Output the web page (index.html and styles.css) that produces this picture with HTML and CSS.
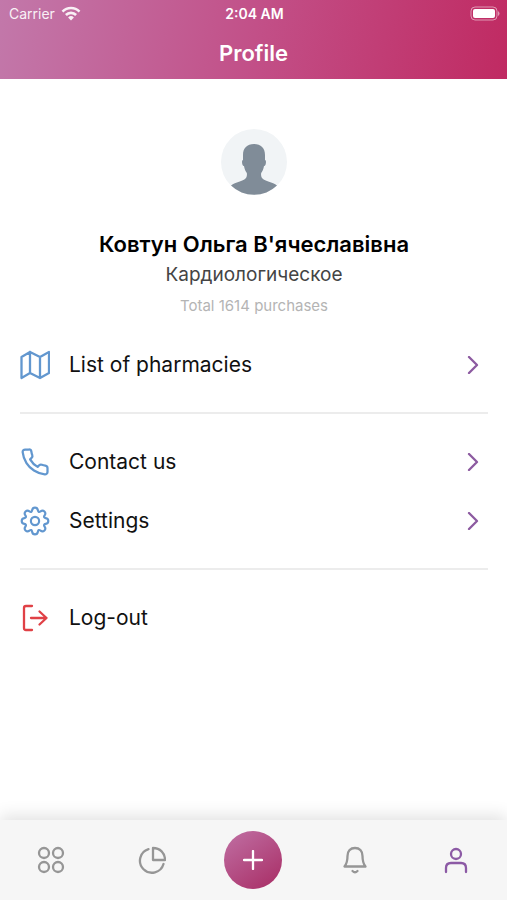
FILE: index.html
```html
<!doctype html>
<html lang="en">
<head>
	<title>Profile</title>

	<meta charset="utf-8" />
	<meta name="viewport" content="width=device-width, initial-scale=1" />

	<link rel="stylesheet" href="styles.css">
</head>

<body>
	<header id="topbar">
		<div class="status">
			<div class="carrier">
				<span>Carrier</span>
				<svg width="20" height="15" viewBox="0 0 20 15" fill="none" stroke="#fff" stroke-width="2.6">
					<path d="M1.5 5.6a12 12 0 0 1 17 0" />
					<path d="M4.9 9a7.2 7.2 0 0 1 10.2 0" />
					<path d="M10 14.5l-2.9-3a4.1 4.1 0 0 1 5.8 0z" fill="#fff" stroke="none" />
				</svg>
			</div>
			<span class="clock">2:04 AM</span>
			<div class="battery">
				<svg width="31" height="15" viewBox="0 0 31 15">
					<rect x="2" y="1" width="26" height="13" rx="4" fill="none" stroke="#fff" stroke-opacity="0.5" />
					<rect x="4" y="3" width="22" height="9" rx="2" fill="#fff" />
					<path d="M29 5v5q1.5-1 1.5-2.5t-1.5-2.5z" fill="#fff" fill-opacity="0.5" />
				</svg>
			</div>
		</div>
		<h1>Profile</h1>
	</header>

	<main>
		<section class="person">
			<svg class="avatar" width="66" height="66" viewBox="0 0 66 66">
				<circle cx="33" cy="33" r="33" fill="#f1f4f6" />
				<path fill="#808c98" d="M33 15c-7 0-11 4-11 11v5c-1 0-1.2 2-.7 4 .3 1.500 1 2 1.700 2 .4 3 1.500 5 2.800 7 .4 2 0 4-1.300 5.500-2.500 3-10 3.500-14.500 7a33 33 0 0 0 46 0c-4.500-3.500-12-4-14.500-7-1.300-1.500-1.700-3.500-1.300-5.500 1.300-2 2.400-4 2.800-7 .7 0 1.400-.5 1.700-2 .5-2 .3-4-.7-4v-5c0-7-4-11-11-11z" />
			</svg>
			<h2>Ковтун Ольга В'ячеславівна</h2>
			<p class="department">Кардиологическое</p>
			<p class="total">Total 1614 purchases</p>
		</section>

		<nav class="menu" aria-label="Profile menu">
			<a href="#pharmacies">
				<svg class="icon" width="30" height="30" viewBox="0 0 30 30">
					<path d="M1.5 7L10 2l10 5 9-5v21l-9 5-10-5-8.5 5zM10 2v21M20 7v21" />
				</svg>
				<span>List of pharmacies</span>
				<svg class="arrow" width="12" height="18" viewBox="0 0 12 18"><path d="M2 1l8 8-8 8" /></svg>
			</a>
			<hr>
			<a href="#contact">
				<svg class="icon" width="30" height="30" viewBox="0 0 24 24">
					<path class="thin" d="M22 16.92v3a2 2 0 0 1-2.18 2 19.79 19.79 0 0 1-8.63-3.07 19.5 19.5 0 0 1-6-6 19.79 19.79 0 0 1-3.07-8.67A2 2 0 0 1 4.11 2h3a2 2 0 0 1 2 1.72c.127.96.361 1.903.7 2.81a2 2 0 0 1-.45 2.11L8.09 9.91a16 16 0 0 0 6 6l1.27-1.27a2 2 0 0 1 2.11-.45c.907.339 1.85.573 2.81.7A2 2 0 0 1 22 16.92z" />
				</svg>
				<span>Contact us</span>
				<svg class="arrow" width="12" height="18" viewBox="0 0 12 18"><path d="M2 1l8 8-8 8" /></svg>
			</a>
			<a href="#settings">
				<svg class="icon" width="30" height="30" viewBox="-1 -1 32 32">
					<circle cx="15" cy="15" r="4.4" />
					<path d="M15 .8Q17.6 .8 18.1 3.6Q18.6 6.4 20.9 4.75Q23.2 3.1 25.05 4.95Q26.9 6.8 25.25 9.1Q23.6 11.4 26.4 11.9Q29.2 12.4 29.2 15Q29.2 17.6 26.4 18.1Q23.6 18.6 25.25 20.9Q26.9 23.2 25.05 25.05Q23.2 26.9 20.9 25.25Q18.6 23.6 18.1 26.4Q17.6 29.2 15 29.2Q12.4 29.2 11.9 26.4Q11.4 23.6 9.1 25.25Q6.8 26.9 4.95 25.05Q3.1 23.2 4.75 20.9Q6.4 18.6 3.6 18.1Q.8 17.6 .8 15Q.8 12.4 3.6 11.9Q6.4 11.4 4.75 9.1Q3.1 6.8 4.95 4.95Q6.8 3.1 9.1 4.75Q11.4 6.4 11.9 3.6Q12.4 .8 15 .8z" />
				</svg>
				<span>Settings</span>
				<svg class="arrow" width="12" height="18" viewBox="0 0 12 18"><path d="M2 1l8 8-8 8" /></svg>
			</a>
			<hr>
			<a href="#logout">
				<svg class="icon red" width="30" height="30" viewBox="0 0 30 30">
					<path d="M12 3H6q-2 0-2 2v20q0 2 2 2h6M11 15h15.5M19.5 8.5l7 6.5-7 6.5" />
				</svg>
				<span>Log-out</span>
			</a>
		</nav>
	</main>

	<nav class="tabs" aria-label="Main">
		<a href="#home" aria-label="Home">
			<svg width="28" height="28" viewBox="0 0 28 28">
				<circle cx="7" cy="7" r="5" /><circle cx="21" cy="7" r="5" />
				<circle cx="7" cy="21" r="5" /><circle cx="21" cy="21" r="5" />
			</svg>
		</a>
		<a href="#stats" aria-label="Statistics">
			<svg width="28" height="28" viewBox="0 0 28 28">
				<path d="M15 2v12h12C27 7 22 2 15 2z" />
				<path d="M10.5 3.2A12 12 0 1 0 25.5 18" />
			</svg>
		</a>
		<button class="add" type="button" aria-label="Add">
			<svg width="20" height="20" viewBox="0 0 20 20"><path d="M10 1v18M1 10h18" /></svg>
		</button>
		<a href="#alerts" aria-label="Notifications">
			<svg width="28" height="28" viewBox="0 0 28 28">
				<path d="M3.5 20.5C6 17.5 6.5 15 6.500 10c0-5 3-8 7.500-8s7.500 3 7.500 8c0 5 .5 7.500 3 10.500z" />
				<path d="M11.5 25q2.500 2.500 5 0" />
			</svg>
		</a>
		<a class="active" href="#profile" aria-label="Profile">
			<svg width="28" height="28" viewBox="0 0 28 28">
				<circle cx="14" cy="8" r="5" />
				<path d="M4 26v-4q0-5 5-5h10q5 0 5 5v4" />
			</svg>
		</a>
	</nav>
</body>
</html>
```
FILE: styles.css
```css
* {
	box-sizing:border-box;
}

body {
	font-family:Inter, "Liberation Sans", sans-serif;
	color:#111;
	background-color:white;
	margin:0;
	min-height:100vh;
	display:flex;
	flex-direction:column;
}

h1, h2, p {
	margin:0;
}

#topbar {
	color:white;
	background:linear-gradient(100deg, #c278aa, #c25088 50%, #c02a62);
	padding-bottom:5px;
}

.status {
	display:grid;
	grid-template-columns:1fr auto 1fr;
	align-items:center;
	height:27px;
	padding:0 7px 0 9px;
	font-size:14px;
}

.carrier {
	display:flex;
	align-items:center;
	gap:6px;
	opacity:0.9;
}

.clock {
	font-weight:600;
}

.battery {
	display:flex;
	justify-content:flex-end;
}

#topbar h1 {
	font-size:22px;
	font-weight:600;
	line-height:41px;
	text-align:center;
	padding-top:6px;
}

main {
	flex:1;
	padding:50px 19px 20px 20px;
}

.person {
	text-align:center;
	margin-bottom:13px;
}

.avatar {
	display:block;
	margin:0 auto 34px;
}

.person h2 {
	font-size:22px;
	font-weight:600;
	line-height:31px;
	color:black;
}

.department {
	font-size:19px;
	line-height:30px;
	color:#444;
}

.total {
	font-size:15px;
	line-height:32px;
	color:#b4b4b4;
}

.menu a {
	display:flex;
	align-items:center;
	height:59px;
	gap:19px;
	padding-right:9px;
	font-size:21px;
	color:#111;
	text-decoration:none;
}

.menu span {
	flex:1;
}

.menu hr {
	height:2px;
	margin:18px 0;
	border:0;
	background-color:#ececec;
}

svg {
	flex:none;
}

.icon, .arrow, .tabs svg {
	fill:none;
	stroke-width:2.3px;
	stroke-linecap:round;
	stroke-linejoin:round;
}

.icon {
	stroke:#6297cf;
}

.thin {
	stroke-width:1.8px;
}

.icon.red {
	stroke:#e04146;
}

.arrow {
	stroke:#8c5aa0;
}

.tabs {
	display:grid;
	grid-template-columns:repeat(5, 1fr);
	place-items:center;
	height:80px;
	background-color:#f6f6f6;
	box-shadow:0 -4px 16px rgba(0, 0, 0, 0.12);
}

.tabs a {
	display:flex;
	stroke:#969696;
}

.tabs .active {
	stroke:#8c5aa5;
}

.add {
	display:flex;
	align-items:center;
	justify-content:center;
	width:58px;
	height:58px;
	padding:0;
	border:0;
	border-radius:50%;
	background:linear-gradient(145deg, #c070a4, #a82c64);
	stroke:white;
}
```
